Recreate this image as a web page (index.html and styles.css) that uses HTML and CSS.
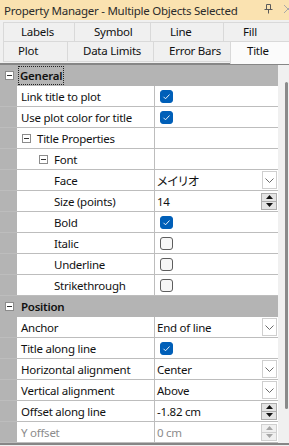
FILE: index.html
```html
<!DOCTYPE html>
<html>
<head>
<meta charset="utf-8">
<link rel="stylesheet" href="styles.css">
</head>
<body>
<div class="win">
  <div class="titlebar">
    <span class="ttl">Property Manager - Multiple Objects Selected</span>
    <svg class="pin" width="9" height="10" viewBox="0 0 9 10"><path d="M2.5 0.5h4v5h-4z M0.5 5.5h8 M4.5 5.5v4" fill="none" stroke="#5a5a5a" stroke-width="1"/></svg>
    <svg class="close" width="10" height="10" viewBox="0 0 10 10"><path d="M1 1l8 8M9 1l-8 8" fill="none" stroke="#a8a8a8" stroke-width="1"/></svg>
  </div>
  <div class="tabs">
    <div class="tabrow">
      <div class="tab t-labels">Labels</div>
      <div class="tab t-symbol">Symbol</div>
      <div class="tab t-line">Line</div>
      <div class="tab t-fill">Fill</div>
    </div>
    <div class="tabrow r2">
      <div class="tab t-plot">Plot</div>
      <div class="tab t-limits">Data Limits</div>
      <div class="tab t-err">Error Bars</div>
      <div class="tab t-title sel">Title</div>
    </div>
  </div>
  <div class="pg">
    <div class="rows">
      <div class="row cat">
        <div class="gut"><span class="mbox"></span></div>
        <div class="cattext"><span class="focus">General</span></div>
      </div>
      <div class="row">
        <div class="gut"></div>
        <div class="lab l1">Link title to plot</div>
        <div class="val"><span class="cb on"><svg width="13" height="13" viewBox="0 0 13 13"><path d="M3.5 6.8l2 2 4-4.3" fill="none" stroke="#fff" stroke-width="0.9"/></svg></span></div>
      </div>
      <div class="row">
        <div class="gut"></div>
        <div class="lab l1">Use plot color for title</div>
        <div class="val"><span class="cb on"><svg width="13" height="13" viewBox="0 0 13 13"><path d="M3.5 6.8l2 2 4-4.3" fill="none" stroke="#fff" stroke-width="0.9"/></svg></span></div>
      </div>
      <div class="row">
        <div class="gut"></div>
        <div class="lab s1"><span class="mbox"></span><span>Title Properties</span></div>
        <div class="val"></div>
      </div>
      <div class="row">
        <div class="gut"></div>
        <div class="lab s2"><span class="mbox"></span><span>Font</span></div>
        <div class="val"></div>
      </div>
      <div class="row">
        <div class="gut"></div>
        <div class="lab l3">Face</div>
        <div class="val"><span class="vt jp">メイリオ</span><span class="dd"><svg width="9" height="5" viewBox="0 0 9 5"><path d="M0.5 0.5l4 4 4-4" fill="none" stroke="#6a6a6a" stroke-width="1"/></svg></span></div>
      </div>
      <div class="row">
        <div class="gut"></div>
        <div class="lab l3">Size (points)</div>
        <div class="val"><span class="vt">14</span><span class="spin"><span class="sb"><svg width="7" height="4" viewBox="0 0 7 4"><path d="M0 4h7L3.5 0z" fill="#111"/></svg></span><span class="sb"><svg width="7" height="4" viewBox="0 0 7 4"><path d="M0 0h7L3.5 4z" fill="#111"/></svg></span></span></div>
      </div>
      <div class="row">
        <div class="gut"></div>
        <div class="lab l3">Bold</div>
        <div class="val"><span class="cb on"><svg width="13" height="13" viewBox="0 0 13 13"><path d="M3.5 6.8l2 2 4-4.3" fill="none" stroke="#fff" stroke-width="0.9"/></svg></span></div>
      </div>
      <div class="row">
        <div class="gut"></div>
        <div class="lab l3">Italic</div>
        <div class="val"><span class="cb"></span></div>
      </div>
      <div class="row">
        <div class="gut"></div>
        <div class="lab l3">Underline</div>
        <div class="val"><span class="cb"></span></div>
      </div>
      <div class="row">
        <div class="gut"></div>
        <div class="lab l3">Strikethrough</div>
        <div class="val"><span class="cb"></span></div>
      </div>
      <div class="row cat">
        <div class="gut"><span class="mbox"></span></div>
        <div class="cattext">Position</div>
      </div>
      <div class="row">
        <div class="gut"></div>
        <div class="lab l1">Anchor</div>
        <div class="val"><span class="vt">End of line</span><span class="dd"><svg width="9" height="5" viewBox="0 0 9 5"><path d="M0.5 0.5l4 4 4-4" fill="none" stroke="#6a6a6a" stroke-width="1"/></svg></span></div>
      </div>
      <div class="row">
        <div class="gut"></div>
        <div class="lab l1">Title along line</div>
        <div class="val"><span class="cb on"><svg width="13" height="13" viewBox="0 0 13 13"><path d="M3.5 6.8l2 2 4-4.3" fill="none" stroke="#fff" stroke-width="0.9"/></svg></span></div>
      </div>
      <div class="row">
        <div class="gut"></div>
        <div class="lab l1">Horizontal alignment</div>
        <div class="val"><span class="vt">Center</span><span class="dd"><svg width="9" height="5" viewBox="0 0 9 5"><path d="M0.5 0.5l4 4 4-4" fill="none" stroke="#6a6a6a" stroke-width="1"/></svg></span></div>
      </div>
      <div class="row">
        <div class="gut"></div>
        <div class="lab l1">Vertical alignment</div>
        <div class="val"><span class="vt">Above</span><span class="dd"><svg width="9" height="5" viewBox="0 0 9 5"><path d="M0.5 0.5l4 4 4-4" fill="none" stroke="#6a6a6a" stroke-width="1"/></svg></span></div>
      </div>
      <div class="row">
        <div class="gut"></div>
        <div class="lab l1">Offset along line</div>
        <div class="val"><span class="vt">-1.82 cm</span><span class="spin"><span class="sb"><svg width="7" height="4" viewBox="0 0 7 4"><path d="M0 4h7L3.5 0z" fill="#111"/></svg></span><span class="sb"><svg width="7" height="4" viewBox="0 0 7 4"><path d="M0 0h7L3.5 4z" fill="#111"/></svg></span></span></div>
      </div>
      <div class="row dis">
        <div class="gut"></div>
        <div class="lab l1">Y offset</div>
        <div class="val"><span class="vt">0 cm</span><span class="spin"><span class="sb"><svg width="7" height="4" viewBox="0 0 7 4"><path d="M0 4h7L3.5 0z" fill="#a6a6a6"/></svg></span><span class="sb"><svg width="7" height="4" viewBox="0 0 7 4"><path d="M0 0h7L3.5 4z" fill="#a6a6a6"/></svg></span></span></div>
      </div>
    </div>
    <div class="scroll"><div class="thumb"></div></div>
  </div>
</div>
</body>
</html>
```
FILE: styles.css
```css
* { box-sizing: border-box; }
html, body { margin: 0; padding: 0; }
body {
  width: 289px;
  height: 446px;
  overflow: hidden;
  background: #f0f0f0;
  font-family: "Noto Sans", "Liberation Sans", sans-serif;
  font-size: 11.5px;
  letter-spacing: -0.25px;
  color: #111;
}
.win { width: 289px; height: 446px; overflow: hidden; }

.titlebar {
  height: 20px;
  background: #fae2b0;
  display: flex;
  align-items: center;
  padding-left: 4px;
  color: #2b2b2b;
  font-size: 11.5px;
  white-space: nowrap;
}
.pin { margin-left: auto; margin-top: -2px; }
.close { margin-left: 10px; margin-right: -4px; margin-top: -2px; }

.tabs {
  padding: 2px 0 1px 3px;
  height: 43px;
}
.tabrow { display: flex; height: 20px; align-items: flex-end; }
.tabrow.r2 { height: 20px; }
.tab {
  height: 20px;
  border: 1px solid #d9d9d9;
  border-right: none;
  background: #f0f0f0;
  line-height: 17px;
  white-space: nowrap;
  color: #111;
}
.tabrow.r2 .tab { height: 21px; margin-top: -1px; line-height: 18px; }
.t-labels { width: 71px; padding-left: 17px; }
.t-symbol { width: 76px; padding-left: 19px; }
.t-line { width: 73px; padding-left: 19px; }
.t-fill { flex: 1; padding-left: 19px; }
.t-plot { width: 64px; padding-left: 14px; }
.t-limits { width: 86px; padding-left: 15px; }
.t-err { width: 77px; padding-left: 15px; }
.tabrow.r2 .t-title.sel {
  flex: 1;
  height: 23px;
  margin-bottom: -2px;
  padding-left: 16px;
  background: #fbfbfb;
  border-bottom: none;
  line-height: 17px;
  position: relative;
  z-index: 1;
}

.pg {
  display: flex;
  border-top: 2px solid #868686;
  border-bottom: 2px solid #868686;
  height: 382px;
}
.rows { width: 278px; background: #fff; overflow: hidden; }
.scroll { width: 11px; background: #f0f0f0; padding-top: 17px; }
.thumb {
  width: 3px;
  height: 327px;
  margin-left: 7px;
  background: #8a8a8a;
  border-radius: 2px;
}

.row {
  display: flex;
  height: 21px;
  border-bottom: 1px solid #bdbdbd;
}
.gut {
  width: 17px;
  flex: none;
  background: #b4b4b4;
  display: flex;
  align-items: center;
  padding-left: 5px;
}
.lab {
  width: 138px;
  flex: none;
  border-right: 1px solid #bdbdbd;
  display: flex;
  align-items: center;
  white-space: nowrap;
  overflow: hidden;
}
.l1 { padding-left: 4px; }
.l3 { padding-left: 37px; }
.s1 { padding-left: 5px; }
.s2 { padding-left: 22px; }
.s1 .mbox, .s2 .mbox { margin-right: 6px; }
.val {
  flex: 1;
  display: flex;
  align-items: center;
  padding-left: 2px;
  padding-right: 1px;
  white-space: nowrap;
}
.vt { flex: 1; }
.jp { font-family: "Noto Sans CJK JP", sans-serif; font-feature-settings: "palt"; font-size: 12px; letter-spacing: 0; }

.row.cat { background: #b4b4b4; border-bottom-color: #b4b4b4; }
.cattext {
  flex: 1;
  display: flex;
  align-items: center;
  padding-left: 4px;
  font-weight: 600;
}
.focus {
  outline: 1px dotted #222;
  outline-offset: 0;
  padding: 0 1px;
  margin-left: -2px;
  line-height: 17px;
}

.mbox {
  width: 9px;
  height: 9px;
  flex: none;
  border: 1px solid #8c8c8c;
  background: #fff;
  position: relative;
}
.mbox::after {
  content: "";
  position: absolute;
  left: 1px;
  top: 3px;
  width: 5px;
  height: 1px;
  background: #333;
}

.cb {
  width: 13px;
  height: 13px;
  margin-left: 3px;
  border-radius: 3px;
  border: 1px solid #5d5d5d;
  background: #f6f6f6;
  display: flex;
  align-items: center;
  justify-content: center;
}
.cb.on { background: #005fb8; border-color: #005fb8; }
.cb svg { display: block; flex: none; }

.dd {
  width: 15px;
  height: 18px;
  border: 1px solid #cfcfcf;
  background: #fff;
  display: flex;
  align-items: center;
  justify-content: center;
}
.spin {
  width: 16px;
  height: 17px;
  display: flex;
  flex-direction: column;
}
.sb {
  flex: 1;
  border: 1px solid #adadad;
  background: #e4e4e4;
  display: flex;
  align-items: center;
  justify-content: center;
}
.sb + .sb { margin-top: -1px; }
.dis .lab, .dis .vt { color: #8c8c8c; }
.dis .sb { border-color: #d0d0d0; background: #f0f0f0; }
```
